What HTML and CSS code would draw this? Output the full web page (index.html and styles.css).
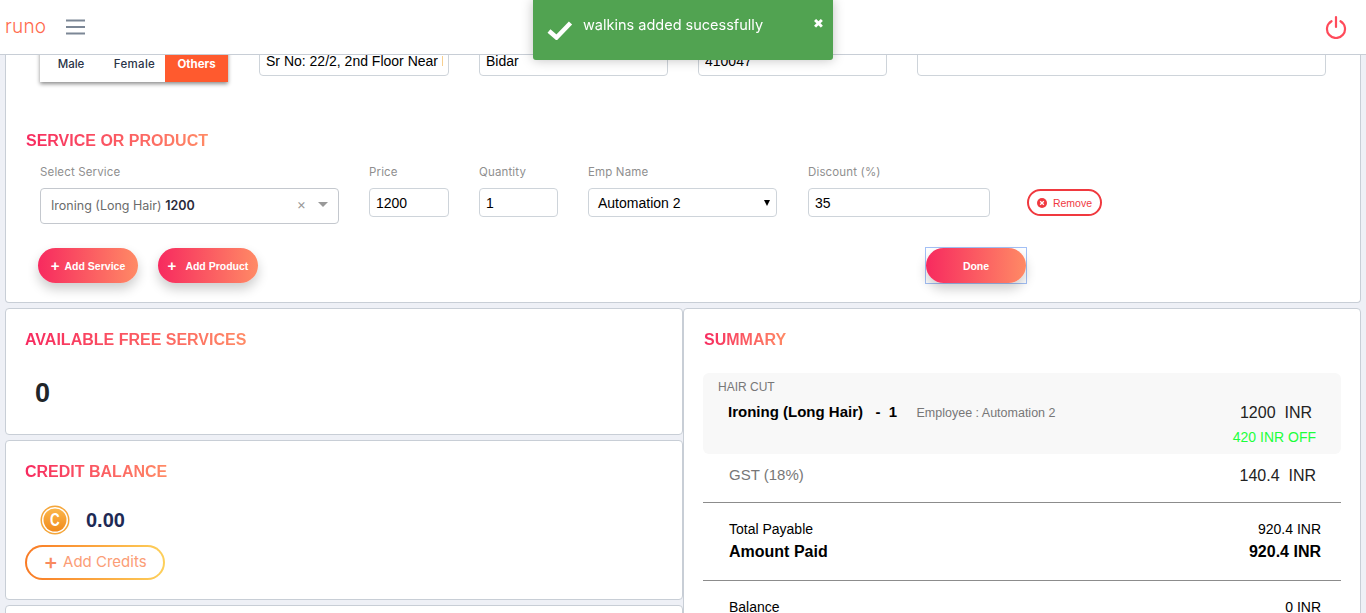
FILE: index.html
```html
<!DOCTYPE html>
<html lang="en">
<head>
    <meta charset="UTF-8">
    <meta name="viewport" content="width=device-width, initial-scale=1.0">
    <title>Walkins</title>
    <link rel="stylesheet" href="styles.css">
</head>
<body>

    <header class="topbar">
        <span class="logo">runo</span>
        <svg class="menu-icon" width="20" height="16" viewBox="0 0 20 16">
            <path d="M0 1.5H19M0 8H19M0 14.5H19" stroke="#7c8796" stroke-width="2" fill="none"/>
        </svg>
        <svg class="power-icon" width="22" height="24" viewBox="0 0 22 24">
            <path d="M6.5 6.2A9 9 0 1 0 15.5 6.2" stroke="#ff4a5a" stroke-width="2.2" fill="none" stroke-linecap="round"/>
            <path d="M11 2V12" stroke="#ff4a5a" stroke-width="2.2" stroke-linecap="round"/>
        </svg>
    </header>

    <div class="toast">
        <svg class="toast-check" width="26" height="20" viewBox="0 0 26 20">
            <path d="M2 11L9.500 17.500L23.500 3" stroke="#fff" stroke-width="4.500" fill="none"/>
        </svg>
        <span class="toast-text">walkins added sucessfully</span>
        <span class="toast-close">&#10006;</span>
    </div>

    <main class="page">
        <section class="card card-form">
            <div class="customer-row">
                <div class="gender">
                    <span class="gender-item gender-male">Male</span>
                    <span class="gender-item gender-female">Female</span>
                    <span class="gender-item gender-active">Others</span>
                </div>
                <input class="field field-address" type="text" value="Sr No: 22/2, 2nd Floor Near Main Road">
                <input class="field field-city" type="text" value="Bidar">
                <input class="field field-city" type="text" value="410047">
                <input class="field field-notes" type="text">
            </div>

            <h3 class="heading heading-service">SERVICE OR PRODUCT</h3>

            <div class="service-row">
                <div class="group group-service">
                    <label>Select Service</label>
                    <div class="service-select">
                        <span class="service-name">Ironing (Long Hair) <b>1200</b></span>
                        <span class="service-clear">&times;</span>
                        <span class="service-arrow"></span>
                    </div>
                </div>
                <div class="group group-price">
                    <label>Price</label>
                    <input class="field" type="text" value="1200">
                </div>
                <div class="group group-qty">
                    <label>Quantity</label>
                    <input class="field" type="text" value="1">
                </div>
                <div class="group group-emp">
                    <label>Emp Name</label>
                    <div class="emp-select">Automation 2<span class="emp-arrow"></span></div>
                </div>
                <div class="group group-discount">
                    <label>Discount (%)</label>
                    <input class="field" type="text" value="35">
                </div>
                <button class="btn-remove">
                    <svg width="10" height="10" viewBox="0 0 10 10">
                        <circle cx="5" cy="5" r="5" fill="#f0393f"/>
                        <path d="M3.200 3.200L6.800 6.800M6.800 3.200L3.200 6.800" stroke="#fff" stroke-width="1.300"/>
                    </svg>
                    Remove
                </button>
            </div>

            <div class="button-row">
                <button class="btn-grad"><span class="plus">+</span>Add Service</button>
                <button class="btn-grad btn-product"><span class="plus">+</span>Add Product</button>
                <div class="done-focus">
                    <button class="btn-grad btn-done">Done</button>
                </div>
            </div>
        </section>

        <div class="columns">
            <div class="col">
                <section class="card card-free">
                    <h3 class="heading">AVAILABLE FREE SERVICES</h3>
                    <div class="free-count">0</div>
                </section>
                <section class="card card-credit">
                    <h3 class="heading">CREDIT BALANCE</h3>
                    <div class="credit-row">
                        <svg width="30" height="30" viewBox="0 0 30 30">
                            <defs>
                                <linearGradient id="coin" x1="0" y1="0" x2="0" y2="1">
                                    <stop offset="0" stop-color="#fbb64a"/>
                                    <stop offset="1" stop-color="#f08a1c"/>
                                </linearGradient>
                            </defs>
                            <circle cx="15" cy="15" r="14.500" fill="#f5a63a"/>
                            <circle cx="15" cy="15" r="13" fill="#fff"/>
                            <circle cx="15" cy="15" r="11.500" fill="url(#coin)"/>
                            <text x="20" y="21.500" transform="scale(0.750 1)" class="coin-letter">C</text>
                        </svg>
                        <span class="credit-value">0.00</span>
                    </div>
                    <button class="btn-credits"><span class="credits-plus">+</span>Add Credits</button>
                </section>
                <section class="card card-more"></section>
            </div>

            <section class="card card-summary">
                <h3 class="heading heading-summary">SUMMARY</h3>
                <div class="summary-box">
                    <div class="summary-cat">HAIR CUT</div>
                    <div class="summary-item">
                        <span class="item-name">Ironing (Long Hair) &nbsp; - &nbsp;1</span>
                        <span class="item-emp">Employee : Automation 2</span>
                        <span class="item-price">1200 &nbsp;INR</span>
                    </div>
                    <div class="item-off">420 INR OFF</div>
                </div>
                <div class="gst-row">
                    <span class="gst-label">GST (18%)</span>
                    <span class="gst-value">140.4 &nbsp;INR</span>
                </div>
                <div class="totals">
                    <div class="total-row"><span>Total Payable</span><span>920.4 INR</span></div>
                    <div class="total-row total-paid"><span>Amount Paid</span><span>920.4 INR</span></div>
                </div>
                <div class="total-row balance-row"><span>Balance</span><span>0 INR</span></div>
            </section>
        </div>
    </main>

</body>
</html>
```

FILE: styles.css
```css
html, body {
    height: 100%;
}
body {
    margin: 0;
    height: 613px;
    overflow: hidden;
    background: #eef0f6;
    font-family: "Liberation Sans", Arial, sans-serif;
    color: #000;
}
h3 {
    margin: 0;
}
button {
    font-family: inherit;
    cursor: pointer;
}

/* top bar */
.topbar {
    display: flex;
    align-items: center;
    height: 54px;
    background: #fff;
    border-bottom: 1px solid #c8ced6;
    padding: 0 19px 0 5px;
}
.logo {
    width: 61px;
    font-family: Inter, sans-serif;
    font-size: 19px;
    font-weight: 300;
    letter-spacing: 0.2px;
    line-height: 20px;
    color: #ff6a4d;
}
.menu-icon {
    margin-right: auto;
}

/* toast */
.toast {
    position: fixed;
    top: 0;
    left: 533px;
    width: 300px;
    height: 60px;
    background: #51a351;
    border-radius: 0 0 3px 3px;
    box-shadow: 0 0 12px rgba(0, 0, 0, 0.25);
    color: #fff;
}
.toast-check {
    position: absolute;
    left: 14px;
    top: 20px;
}
.toast-text {
    position: absolute;
    left: 50px;
    top: 16px;
    font-family: Inter, sans-serif;
    font-size: 14.500px;
    line-height: 18px;
}
.toast-close {
    position: absolute;
    right: 9px;
    top: 16px;
    font-size: 13px;
    line-height: 16px;
    font-family: "DejaVu Sans", sans-serif;
}

/* cards */
.page {
    padding: 0 5px;
}
.card {
    box-sizing: border-box;
    background: #fff;
    border: 1px solid #c8ced6;
    border-radius: 4px;
    overflow: hidden;
}
.card-form {
    height: 248px;
    border-top: none;
    border-radius: 0 0 4px 4px;
    padding: 0 0 0 34px;
}
.columns {
    display: grid;
    grid-template-columns: 1fr 1fr;
    margin-top: 5px;
}
.col {
    display: flex;
    flex-direction: column;
    gap: 5px;
}
.heading {
    display: inline-block;
    font-size: 16px;
    line-height: 20px;
    font-weight: 700;
    color: #f72a5f;
    background: linear-gradient(90deg, #f72a5f, #ff8a65);
    -webkit-background-clip: text;
    background-clip: text;
    -webkit-text-fill-color: transparent;
}

/* customer row, scrolled partly under the top bar */
.customer-row {
    display: flex;
    align-items: flex-start;
    margin-top: -13px;
}
.gender {
    display: flex;
    width: 188px;
    height: 40px;
    background: #fff;
    box-shadow: 0 2px 4px rgba(0, 0, 0, 0.45);
    font-family: Inter, sans-serif;
    font-size: 11.500px;
    font-weight: 500;
    color: #2a3347;
    flex-shrink: 0;
}
.gender-item {
    display: flex;
    align-items: center;
    justify-content: center;
    padding-top: 4px;
    box-sizing: border-box;
}
.gender-male {
    width: 62px;
}
.gender-female {
    width: 63px;
    padding-left: 2px;
    letter-spacing: 0.3px;
}
.gender-active {
    width: 63px;
    background: #ff5a2e;
    color: #fff;
    font-weight: 700;
}
.field {
    box-sizing: border-box;
    width: 100%;
    height: 29px;
    padding: 0 5px 0 6px;
    border: 1px solid #ced4da;
    border-radius: 4px;
    background: #fff;
    font-family: "Liberation Sans", Arial, sans-serif;
    font-size: 14px;
    color: #000;
    outline: none;
}
.customer-row .field {
    margin-top: 5px;
    padding-bottom: 2px;
    flex-shrink: 0;
}
.customer-row .field-address {
    width: 190px;
    margin-left: 31px;
}
.customer-row .field-city {
    width: 189px;
    margin-left: 30px;
}
.customer-row .field-notes {
    width: 409px;
    margin-left: 30px;
}
.heading-service {
    display: table;
    margin: 49px 0 0 -14px;
}

/* service row */
.service-row {
    display: flex;
    align-items: flex-start;
    margin-top: 14px;
}
.group label {
    display: block;
    height: 14px;
    margin-bottom: 9px;
    font-family: Inter, sans-serif;
    font-size: 11.500px;
    letter-spacing: 0.15px;
    line-height: 14px;
    color: #8f8f8f;
}
.group-service {
    width: 299px;
}
.group-price {
    width: 80px;
    margin-left: 30px;
}
.group-qty {
    width: 79px;
    margin-left: 30px;
}
.group-emp {
    width: 189px;
    margin-left: 30px;
}
.group-discount {
    width: 182px;
    margin-left: 31px;
}
.service-select {
    box-sizing: border-box;
    display: flex;
    align-items: center;
    height: 36px;
    padding: 0 10px 2px;
    border: 1px solid #c4c8ce;
    border-radius: 4px;
    font-family: Inter, sans-serif;
    font-size: 12.500px;
    color: #6b6b6b;
}
.service-name {
    flex: 1;
}
.service-name b {
    font-weight: 600;
    color: #2a2a3a;
}
.service-clear {
    font-size: 14px;
    line-height: 14px;
    color: #999;
    margin: 0 12px 2px 0;
}
.service-arrow {
    width: 0;
    height: 0;
    border-left: 5px solid transparent;
    border-right: 5px solid transparent;
    border-top: 5px solid #999;
    margin-bottom: 2px;
}
.emp-select {
    box-sizing: border-box;
    display: flex;
    align-items: center;
    justify-content: space-between;
    height: 29px;
    padding: 0 6px 0 9px;
    border: 1px solid #ced4da;
    border-radius: 4px;
    font-size: 14px;
}
.emp-arrow {
    width: 0;
    height: 0;
    border-left: 3px solid transparent;
    border-right: 3px solid transparent;
    border-top: 6px solid #000;
}
.btn-remove {
    display: flex;
    align-items: center;
    justify-content: center;
    gap: 6px;
    box-sizing: border-box;
    width: 75px;
    height: 27px;
    margin: 24px 0 0 37px;
    padding: 0;
    background: #fff;
    border: 2px solid #f0393f;
    border-radius: 14px;
    font-size: 10.500px;
    color: #f0393f;
}

/* buttons */
.button-row {
    display: flex;
    align-items: flex-start;
    margin: 24px 0 0 -2px;
}
.btn-grad {
    display: flex;
    align-items: center;
    justify-content: center;
    box-sizing: border-box;
    width: 100px;
    height: 35px;
    padding: 0;
    border: none;
    border-radius: 18px;
    background: linear-gradient(90deg, #f72a5f, #ff8a65);
    box-shadow: 0 6px 12px rgba(0, 0, 0, 0.2);
    font-size: 10.500px;
    font-weight: 700;
    color: #fff;
}
.plus {
    font-size: 15px;
    line-height: 15px;
    margin-right: 5px;
}
.btn-product {
    margin-left: 20px;
}
.btn-product .plus {
    margin-right: 9px;
}
.done-focus {
    margin: -1px 0 0 667px;
    border: 1px solid #a3c0f6;
}

/* left column */
.card-free {
    height: 127px;
    padding: 21px 0 0 19px;
}
.free-count {
    margin: 28px 0 0 10px;
    font-size: 27px;
    line-height: 30px;
    font-weight: 700;
    color: #212529;
}
.card-credit {
    height: 160px;
    padding: 21px 0 0 19px;
}
.credit-row {
    display: flex;
    align-items: center;
    gap: 16px;
    margin: 23px 0 0 15px;
}
.coin-letter {
    font-family: "Liberation Sans", Arial, sans-serif;
    font-size: 18px;
    font-weight: 700;
    fill: #fff;
    text-anchor: middle;
}
.credit-value {
    font-size: 20px;
    font-weight: 700;
    color: #1e2a55;
}
.btn-credits {
    display: flex;
    align-items: center;
    justify-content: center;
    box-sizing: border-box;
    width: 140px;
    height: 35px;
    margin-top: 10px;
    padding: 0 0 2px;
    border: 2px solid transparent;
    border-radius: 18px;
    background: linear-gradient(#fff, #fff) padding-box, linear-gradient(90deg, #f97a24, #fdd05a) border-box;
    font-family: Inter, sans-serif;
    font-size: 15px;
    color: #fb9d76;
}
.credits-plus {
    font-size: 22px;
    line-height: 19px;
    font-weight: 500;
    margin-right: 5px;
    color: #f98a5e;
}
.card-more {
    height: 60px;
}

/* summary */
.card-summary {
    height: 330px;
    padding: 21px 19px 0 19px;
}
.heading-summary {
    margin-left: 1px;
}
.summary-box {
    margin-top: 23px;
    height: 81px;
    box-sizing: border-box;
    padding: 7px 25px 0 15px;
    background: #f8f8f8;
    border-radius: 6px;
}
.summary-cat {
    font-size: 12px;
    line-height: 14px;
    color: #777;
}
.summary-item {
    display: flex;
    align-items: baseline;
    margin: 9px 4px 0 10px;
}
.item-name {
    width: 188.500px;
    font-size: 15px;
    font-weight: 700;
}
.item-emp {
    flex: 1;
    font-size: 12.500px;
    color: #777;
}
.item-price {
    font-size: 16px;
    color: #222;
    position: relative;
    top: 1px;
}
.item-off {
    margin-top: 8px;
    text-align: right;
    font-size: 14px;
    line-height: 16px;
    color: #1cff3c;
}
.gst-row {
    display: flex;
    justify-content: space-between;
    padding: 12px 25px 0 26px;
    height: 49px;
    box-sizing: border-box;
    border-bottom: 1px solid #8c8c8c;
    line-height: 18px;
}
.gst-label {
    font-size: 15px;
    color: #777;
}
.gst-value {
    font-size: 16px;
    color: #222;
    padding-top: 1px;
}
.totals {
    height: 78px;
    box-sizing: border-box;
    padding-top: 18px;
    border-bottom: 1px solid #8c8c8c;
}
.total-row {
    display: flex;
    justify-content: space-between;
    padding: 0 20px 0 26px;
    font-size: 14px;
    line-height: 17px;
}
.total-paid {
    margin-top: 5px;
    font-size: 16px;
    font-weight: 700;
}
.balance-row {
    margin-top: 18px;
}
```
